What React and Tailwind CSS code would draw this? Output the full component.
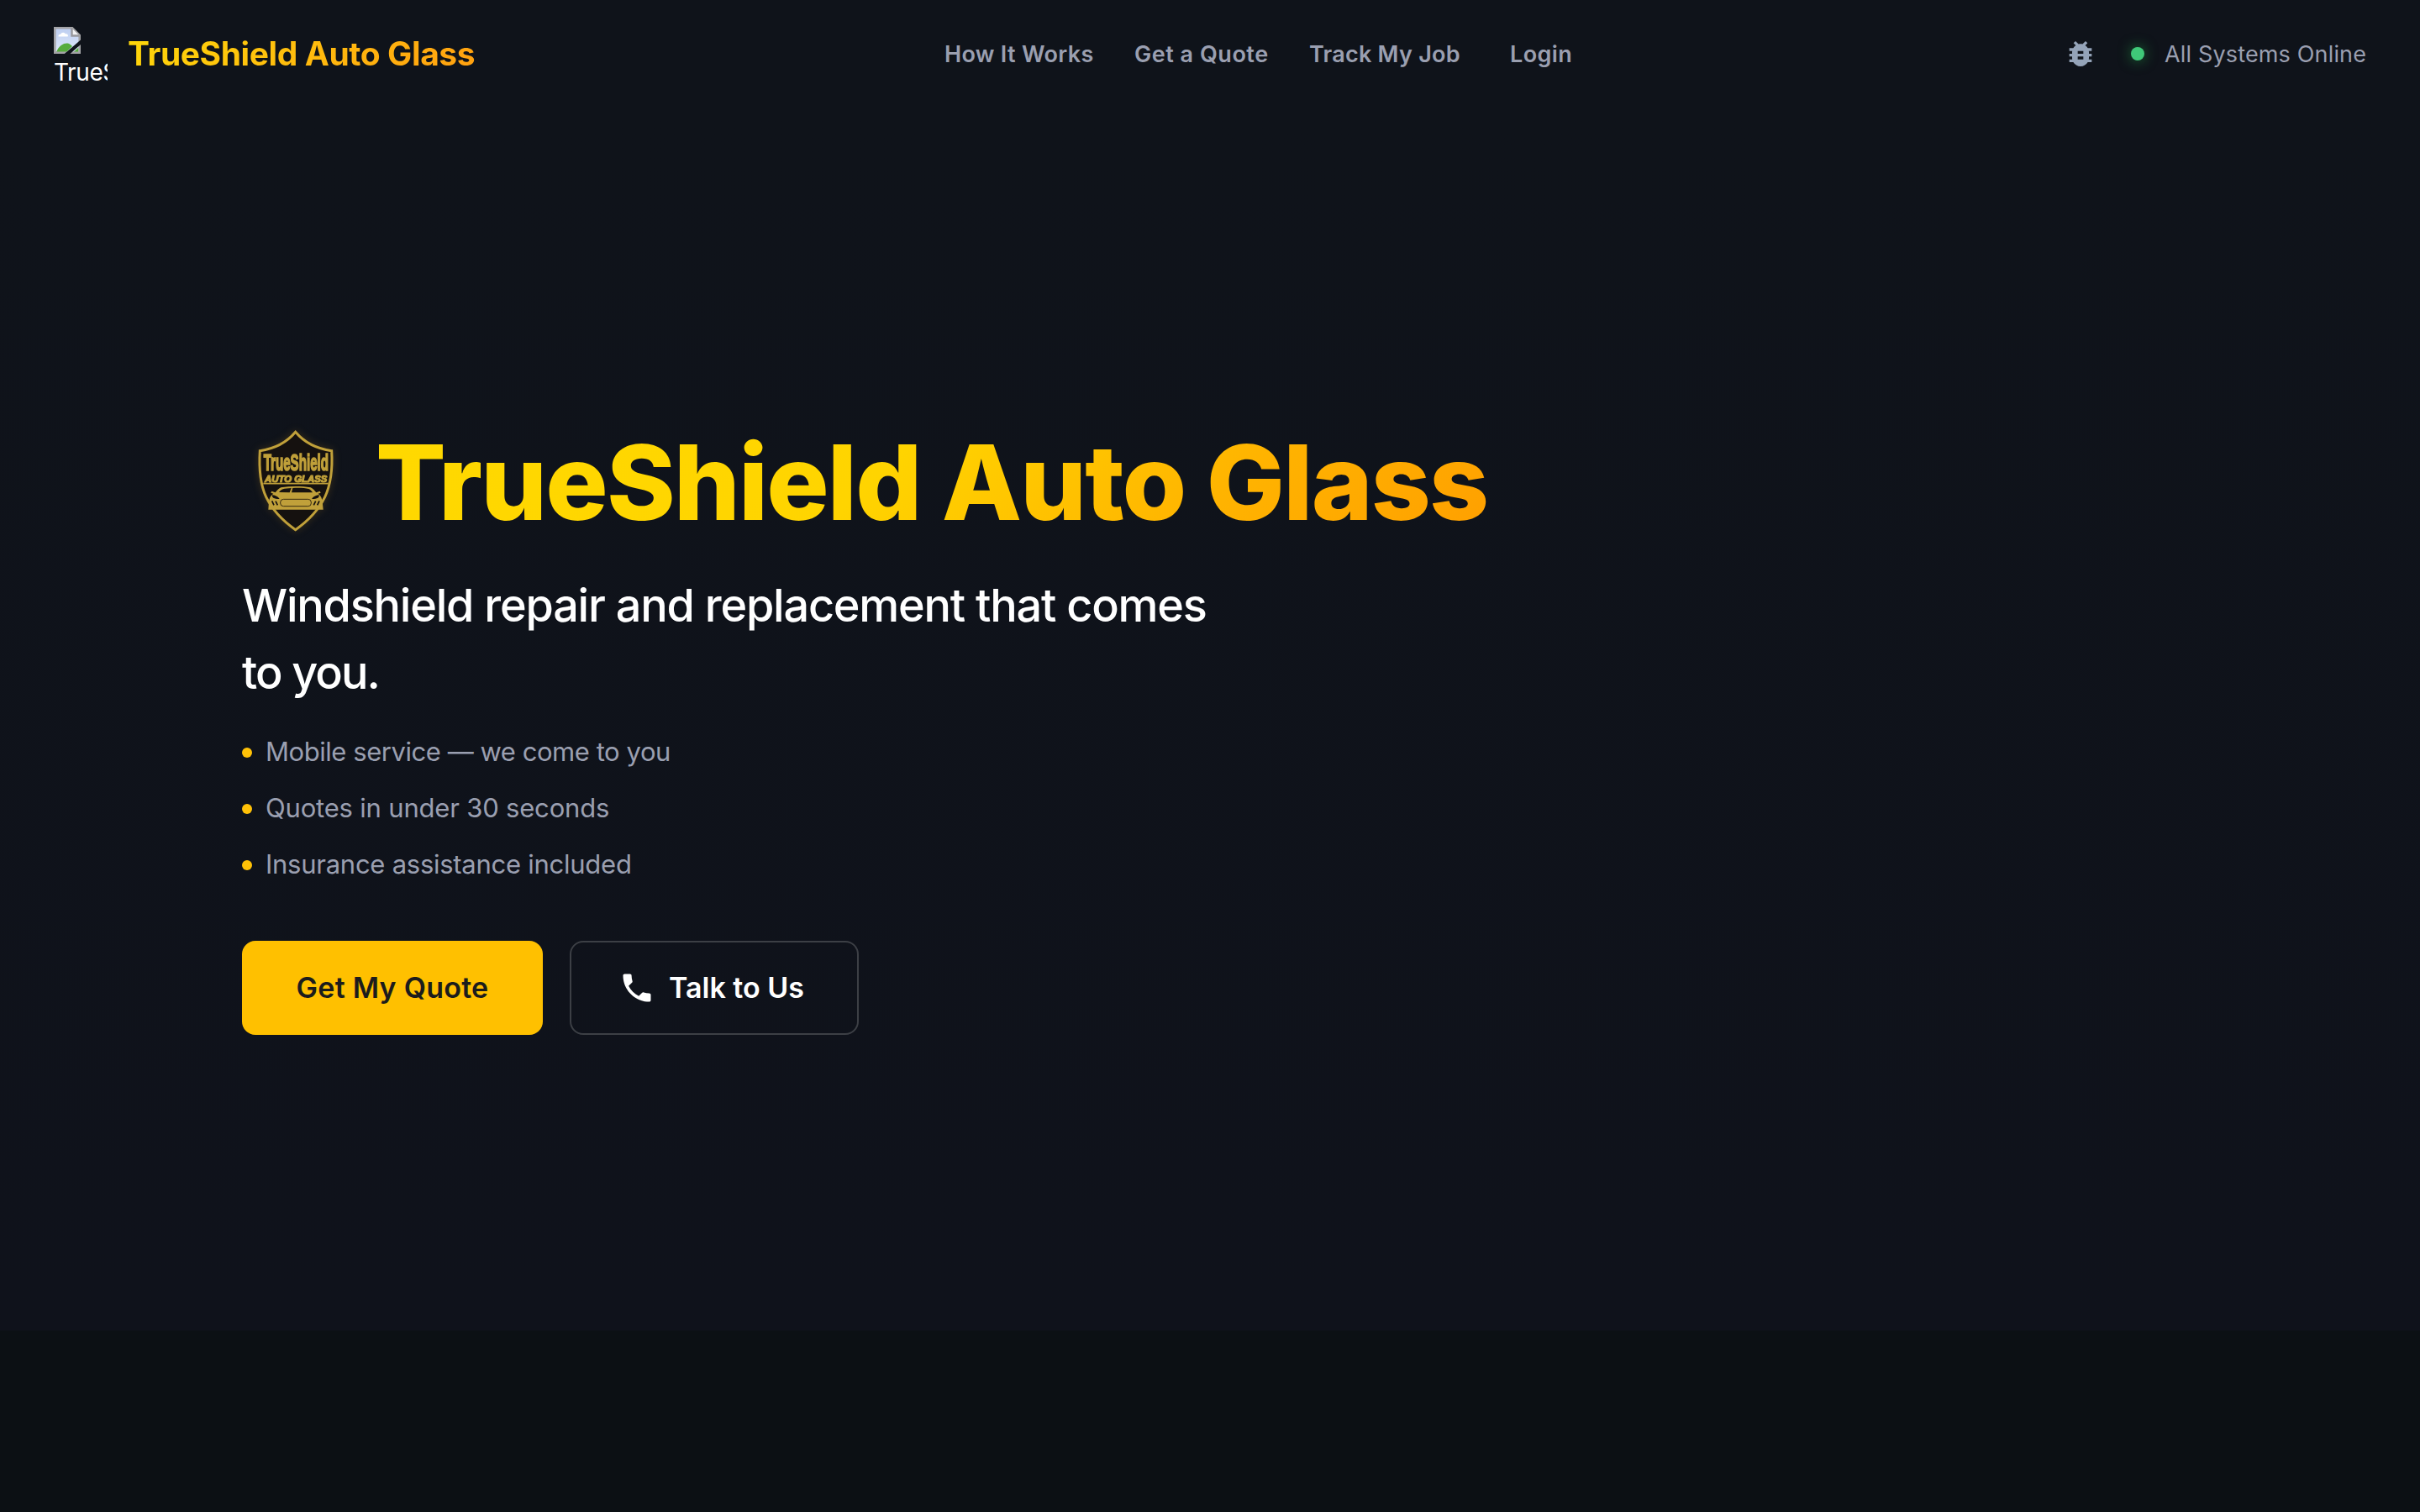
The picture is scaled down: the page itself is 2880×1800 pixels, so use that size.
import React from "react";
import { MdBugReport, MdPhone } from "react-icons/md";

function BrokenImage() {
  return (
    <svg className="block h-8 w-8" viewBox="0 0 32 32">
      <defs>
        <linearGradient id="sky" x1="0" y1="0" x2="0" y2="1">
          <stop offset="0" stopColor="#bccdf0" />
          <stop offset="1" stopColor="#dfe9fb" />
        </linearGradient>
      </defs>
      <path d="M1.2 1.2H22L30.8 10V30.8H1.2Z" fill="url(#sky)" />
      <path d="M5.5 11.5a2.6 2.6 0 0 1 2.6-2.8 3.4 3.4 0 0 1 6-.3 2.2 2.2 0 0 1 2.6 3.1Z" fill="#fff" />
      <path d="M3 30C6 22 12 19 16.500 19.500C19 20 20.500 21.500 22 23L15 30Z" fill="#56ac3c" />
      <path d="M23.500 30L29.500 24.500V30Z" fill="#56ac3c" />
      <path d="M1.300 1.300H22L30.700 10V30.700H1.300Z" fill="none" stroke="#a3a3a6" strokeWidth="2.600" />
      <path d="M21.500 1.500V10.500H30.500" fill="#f3f3f5" stroke="#98989c" strokeWidth="2.400" />
      <path d="M24 0H32V8Z" fill="#0f131a" />
      <path d="M12.800 32L32 15.500V21L19.500 32Z" fill="#0f131a" />
    </svg>
  );
}

function ShieldLogo() {
  return (
    <svg className="h-32 w-32 shrink-0 drop-shadow-[0_0_5px_rgba(150,105,25,0.3)]" viewBox="24 60 384 384">
      <path
        d="M215 73C184 110 140 133 88 140C84 205 90 262 110 305C132 350 172 392 215 422C258 392 298 350 320 305C340 262 348 205 344 140C291 133 246 110 215 73Z"
        fill="#15110f"
        stroke="#c0a03a"
        strokeWidth="9"
        strokeLinejoin="miter"
      />
      <g fill="#c0a03a" stroke="#c0a03a" fontFamily="'Liberation Sans', Arial, sans-serif" fontWeight="700">
        <text x="101" y="211" fontSize="81" textLength="232" lengthAdjust="spacingAndGlyphs" strokeWidth="5">TrueShield</text>
        <text x="105" y="251" fontSize="34" fontStyle="italic" textLength="223" lengthAdjust="spacingAndGlyphs" strokeWidth="3.500">AUTO GLASS</text>
      </g>
      <path d="M100 257H332" stroke="#c0a03a" strokeWidth="5" />
      <path
        d="M163 271C198 266 236 266 269 271C278 275 284 283 289 289L302 284L305 290L296 293C306 300 310 310 311 323L314 350H118L120 323C121 310 125 300 136 293L127 290L130 284L143 289C148 283 154 275 163 271Z"
        fill="#c0a03a"
      />
      <path d="M156 288C162 280 168 276 176 275L200 273L194 289Z M205 273C228 271 248 273 262 276C269 279 273 284 276 289L201 289Z" fill="#15110f" />
      <path d="M131 298C142 298 151 303 158 311C146 313 137 310 133 305Z M300 298C289 298 280 303 273 311C285 313 294 310 298 305Z" fill="#15110f" />
      <path d="M131 319L138 334M144 320L151 334M300 319L293 334M287 320L280 334" stroke="#15110f" strokeWidth="5" />
      <rect x="161" y="313" width="110" height="25" rx="11" fill="none" stroke="#3a2d12" strokeWidth="3" />
    </svg>
  );
}

const bullets = [
  { text: "Mobile service — we come to you", tracking: "tracking-[-0.45px]" },
  { text: "Quotes in under 30 seconds", tracking: "tracking-[-0.19px]" },
  { text: "Insurance assistance included", tracking: "tracking-[-0.26px]" },
];

export default function App() {
  return (
    <div className="flex h-[1800px] w-full flex-col overflow-hidden bg-[#0c1014] font-['Inter',sans-serif]">
      <header className="flex h-32 shrink-0 items-center bg-[#0f131a] px-16">
        <div className="flex w-[1060px] items-center gap-6">
          <div className="h-16 w-16 overflow-hidden">
            <BrokenImage />
            <span className="block whitespace-nowrap pt-px text-[28px] leading-[43px] tracking-[-0.4px] text-white">TrueS</span>
          </div>
          <span className="bg-[linear-gradient(135deg,#ffd90a,#ff9f10)] bg-clip-text text-[39px] font-bold leading-[56px] tracking-[-0.41px] text-transparent">
            TrueShield Auto Glass
          </span>
        </div>
        <nav className="flex items-center gap-12 whitespace-nowrap pt-[2px] text-[27px] font-semibold text-[#9a9fb0]">
          <a className="w-[178px] tracking-[0.31px]">How It Works</a>
          <a className="w-[160px] tracking-[0.52px]">Get a Quote</a>
          <a className="w-[179px] tracking-[0.24px]">Track My Job</a>
          <a className="ml-3 tracking-[0.4px]">Login</a>
        </nav>
        <div className="ml-auto flex items-center">
          <MdBugReport className="mr-10 h-10 w-10 text-[#94a3b8]" />
          <span className="mr-6 h-4 w-4 rounded-full bg-[#3fc878] shadow-[0_0_16px_rgba(34,160,70,0.7)]" />
          <span className="w-[240px] whitespace-nowrap pt-[2px] text-[27px] tracking-[0.16px] text-[#9a9fb0]">All Systems Online</span>
        </div>
      </header>
      <main className="h-[1456px] shrink-0 bg-[linear-gradient(#0f131a,#0f121b)] pl-[288px] pt-[374px]">
        <div className="flex h-36 items-center gap-8">
          <ShieldLogo />
          <h1 className="-ml-px whitespace-nowrap bg-[linear-gradient(135deg,#ffd900_0%,#ffd400_45%,#ffb300_75%,#ff9f00_100%)] bg-clip-text text-[124px] font-extrabold leading-[144px] tracking-[-1.82px] text-transparent">
            TrueShield Auto Glass
          </h1>
        </div>
        <p className="mt-[35px] w-[1200px] text-[54px] font-medium leading-[80px] tracking-[-1.23px] text-white">
          Windshield repair and replacement that comes <span className="tracking-[-1.9px]">to you.</span>
        </p>
        <ul className="mt-[28px] flex flex-col gap-4 text-[31px] leading-[51px] text-[#9a9fb0]">
          {bullets.map((b) => (
            <li key={b.text} className="flex items-center gap-4">
              <span className="mt-[3px] h-3 w-3 rounded-full bg-[#ffc107]" />
              <span className={b.tracking}>{b.text}</span>
            </li>
          ))}
        </ul>
        <div className="mt-[66px] flex gap-8 text-[34px] font-semibold">
          <button className="h-28 w-[358px] rounded-[16px] bg-[#ffc000] pb-[2px] text-[#1c1c1c]">
            <span className="tracking-[0.24px]">Get My Quote</span>
          </button>
          <button className="flex h-28 w-[344px] items-center gap-4 rounded-[16px] border-2 border-[#3c3f45] pl-[56px] text-white">
            <MdPhone className="h-[44px] w-[44px]" />
            <span className="pb-[2px]">Talk to Us</span>
          </button>
        </div>
      </main>
    </div>
  );
}
